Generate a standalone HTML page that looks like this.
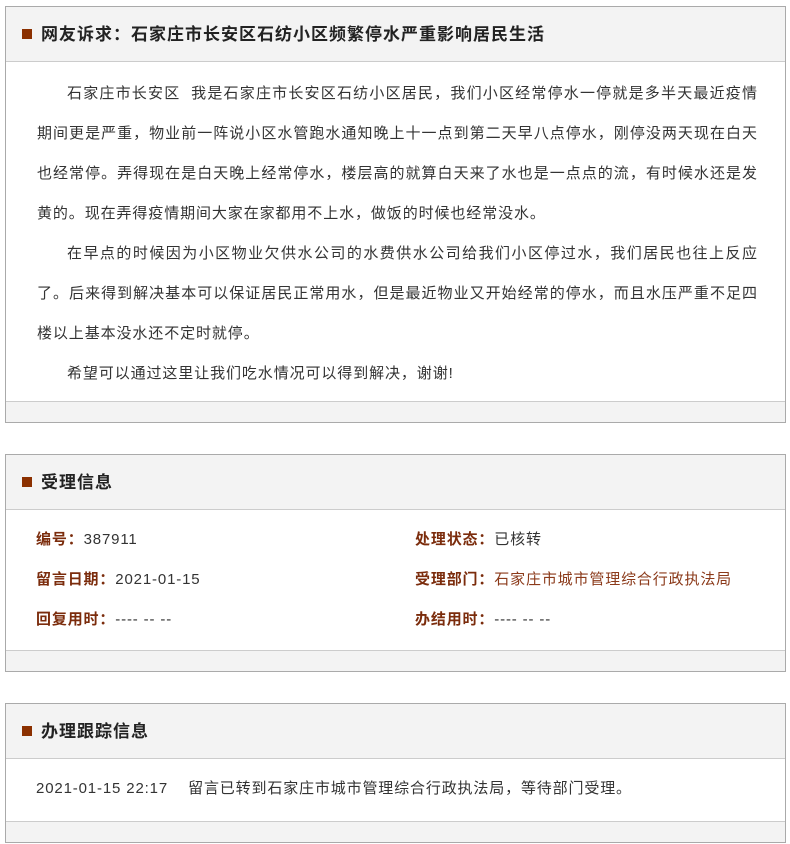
<!DOCTYPE html>
<html><head><meta charset="utf-8"><style>
body{margin:0;background:#fff;font-family:"Liberation Sans","Noto Sans CJK SC",sans-serif;color:#333;}
.box{position:absolute;left:5px;width:779px;border:1px solid #aaa;background:#fff;}
.hd{height:54px;background:#f3f3f3;border-bottom:1px solid #ccc;position:relative;}
.hd i{position:absolute;left:16px;top:22px;width:10px;height:10px;background:#8b3000;}
.hd b{position:absolute;left:35px;top:0;line-height:56px;font-size:17px;color:#222;letter-spacing:1px;}
.ft{height:20px;background:#f3f3f3;border-top:1px solid #ccc;}
.txt{position:absolute;left:31px;top:67px;width:720px;font-size:15px;line-height:40px;}
.txt div{text-align:justify;text-align-last:justify;white-space:nowrap;}
.txt div.in{padding-left:30px;}
.txt div.e{text-align-last:left;letter-spacing:0.9px;}
.row{position:absolute;font-size:15px;line-height:20px;white-space:nowrap;letter-spacing:0.85px;}
.row span{color:#7b2c0c;font-weight:bold;}
</style></head><body>
<div class="box" style="top:6px;height:415px;">
<div class="hd"><i></i><b>网友诉求：石家庄市长安区石纺小区频繁停水严重影响居民生活</b></div>
<div class="txt">
<div class="in">石家庄市长安区&nbsp;&nbsp;我是石家庄市长安区石纺小区居民，我们小区经常停水一停就是多半天最近疫情</div>
<div>期间更是严重，物业前一阵说小区水管跑水通知晚上十一点到第二天早八点停水，刚停没两天现在白天</div>
<div>也经常停。弄得现在是白天晚上经常停水，楼层高的就算白天来了水也是一点点的流，有时候水还是发</div>
<div class="e">黄的。现在弄得疫情期间大家在家都用不上水，做饭的时候也经常没水。</div>
<div class="in">在早点的时候因为小区物业欠供水公司的水费供水公司给我们小区停过水，我们居民也往上反应</div>
<div>了。后来得到解决基本可以保证居民正常用水，但是最近物业又开始经常的停水，而且水压严重不足四</div>
<div class="e">楼以上基本没水还不定时就停。</div>
<div class="in e">希望可以通过这里让我们吃水情况可以得到解决，谢谢!</div>
</div>
<div class="ft" style="position:absolute;left:0;right:0;bottom:0;"></div>
</div>

<div class="box" style="top:454px;height:216px;">
<div class="hd"><i></i><b>受理信息</b></div>
<div class="row" style="left:30px;top:75px;"><span>编号：</span>387911</div>
<div class="row" style="left:30px;top:115px;"><span>留言日期：</span>2021-01-15</div>
<div class="row" style="left:30px;top:155px;"><span>回复用时：</span>---- -- --</div>
<div class="row" style="left:409px;top:75px;"><span>处理状态：</span>已核转</div>
<div class="row" style="left:409px;top:115px;"><span>受理部门：</span><em style="font-style:normal;color:#8b3a1a">石家庄市城市管理综合行政执法局</em></div>
<div class="row" style="left:409px;top:155px;"><span>办结用时：</span>---- -- --</div>
<div class="ft" style="position:absolute;left:0;right:0;bottom:0;"></div>
</div>

<div class="box" style="top:703px;height:138px;">
<div class="hd"><i></i><b>办理跟踪信息</b></div>
<div class="row" style="left:30px;top:75px;">2021-01-15 22:17&nbsp;&nbsp;&nbsp;&nbsp;留言已转到石家庄市城市管理综合行政执法局，等待部门受理。</div>
<div class="ft" style="position:absolute;left:0;right:0;bottom:0;"></div>
</div>
</body></html>
